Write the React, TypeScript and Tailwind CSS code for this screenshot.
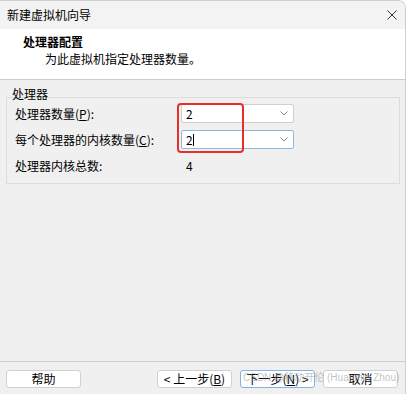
import React from "react";

const font = "font-['Microsoft_YaHei_UI','Noto_Sans_CJK_SC',sans-serif]";

const Combo = ({ value, focused, caret }: { value: string; focused?: boolean; caret?: boolean }) => (
  <div
    className={`w-[113px] h-[19px] bg-white border ${
      focused ? "border-[#8fb8de]" : "border-[#cfcfcf]"
    } rounded-[2px] flex items-center justify-between pl-[4px] pr-[5px]`}
  >
    <span className="text-[12px] leading-none text-black flex items-center">
      {value}
      {caret && <span className="inline-block w-px h-[12px] bg-black" />}
    </span>
    <svg width="8" height="5" viewBox="0 0 8 5" fill="none">
      <path d="M0.5 0.5 L4 4 L7.5 0.5" stroke="#777" strokeWidth="0.9" />
    </svg>
  </div>
);

const Btn = ({ children, primary, className = "" }: { children: React.ReactNode; primary?: boolean; className?: string }) => (
  <div
    className={`w-[75px] h-[18px] bg-white border ${
      primary ? "border-[#7eb4ea]" : "border-[#d0d0d0]"
    } rounded-[3px] flex items-center justify-center text-[12px] text-black ${className}`}
  >
    {children}
  </div>
);

export default function App() {
  return (
    <div className={`w-[407px] h-[394px] bg-white ${font} text-black`}>
      <div className="w-[406px] h-[394px] flex flex-col border-r border-t border-[#cfcfcf] rounded-tr-[8px] overflow-hidden bg-[#f0f0f0]">
        {/* title bar */}
        <div className="h-[28px] shrink-0 bg-[#f3f3f3] flex items-center justify-between pl-[7px] pr-[8px]">
          <span className="text-[12px]">新建虚拟机向导</span>
          <svg width="10" height="10" viewBox="0 0 10 10">
            <path d="M0.5 0.5 L9.5 9.5 M9.5 0.5 L0.5 9.5" stroke="#333" strokeWidth="1" />
          </svg>
        </div>

        {/* header */}
        <div className="h-[51px] shrink-0 bg-white border-b border-[#cdcdcd] pl-[23px] pt-[4px]">
          <div className="text-[12px] font-bold leading-[17px]">处理器配置</div>
          <div className="text-[12px] leading-[17px] pl-[22px]">为此虚拟机指定处理器数量。</div>
        </div>

        {/* body */}
        <div className="flex-1 px-[6px] pt-[7px]">
          <div className="relative">
            <div className="text-[12px] leading-[14px] pl-[6px]">处理器</div>
            <div className="border border-[#dcdcdc] h-[87px] -mt-[4px] w-[394px] pl-[8px] pt-[6px] flex flex-col">
              <div className="flex items-center h-[19px]">
                <span className="w-[166px] text-[12px]">
                  处理器数量(<span className="underline">P</span>):
                </span>
                <Combo value="2" />
              </div>
              <div className="flex items-center h-[19px] mt-[7px]">
                <span className="w-[166px] text-[12px]">
                  每个处理器的内核数量(<span className="underline">C</span>):
                </span>
                <Combo value="2" focused caret />
              </div>
              <div className="flex items-center h-[19px] mt-[7px]">
                <span className="w-[171px] text-[12px]">处理器内核总数:</span>
                <span className="text-[12px]">4</span>
              </div>
            </div>
            {/* red highlight */}
            <div className="absolute left-[171px] top-[16px] w-[67px] h-[50px] border-2 border-[#e8302b] rounded-[4px]" />
          </div>
        </div>

        {/* footer */}
        <div className="h-[33px] shrink-0 border-t border-[#cdcdcd] flex items-start pt-[8px] pl-[6px] relative">
          <Btn>帮助</Btn>
          <Btn className="ml-[76px]">
            &lt; 上一步(<span className="underline">B</span>)
          </Btn>
          <Btn primary className="ml-[8px]">
            下一步(<span className="underline">N</span>) &gt;
          </Btn>
          <Btn className="ml-[8px]">取消</Btn>
          <span className="absolute left-[243px] top-[11px] text-[10px] leading-none text-[#9a9a9a]/60 whitespace-nowrap font-['Liberation_Sans','Noto_Sans_CJK_SC',sans-serif]">
            CSDN @移动开伦 (Huanmin Zhou)
          </span>
        </div>
      </div>
    </div>
  );
}
